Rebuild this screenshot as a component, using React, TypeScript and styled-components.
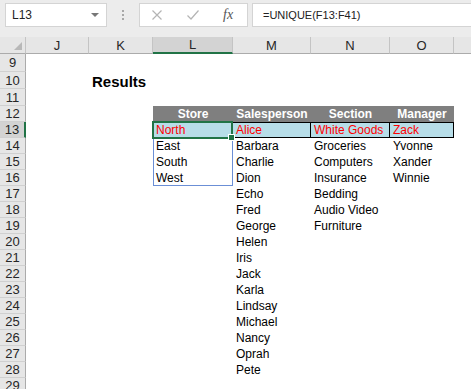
import * as React from "react";
import styled, { createGlobalStyle } from "styled-components";

const GlobalStyle = createGlobalStyle`
  html, body {
    margin: 0;
    padding: 0;
    background: #ffffff;
    overflow: hidden;
  }
  body {
    font-family: "Liberation Sans", Arial, sans-serif;
  }
`;

const columns = [
  { key: "J", width: 63 },
  { key: "K", width: 64 },
  { key: "L", width: 80 },
  { key: "M", width: 78 },
  { key: "N", width: 79 },
  { key: "O", width: 64 },
  { key: "P", width: 40 },
];
const rowHeaderWidth = 26;
const colHeaderHeight = 17;

type CellKind = "title" | "head" | "hit" | "plain";
type CellDef = { text: string; kind: CellKind };

const rowHeights: Record<number, number> = { 9: 18, 10: 17, 11: 17 };

const salespeople = [
  "Barbara", "Charlie", "Dion", "Echo", "Fred", "George", "Helen", "Iris",
  "Jack", "Karla", "Lindsay", "Michael", "Nancy", "Oprah", "Pete",
];
const stores = ["East", "South", "West"];
const sections = ["Groceries", "Computers", "Insurance", "Bedding", "Audio Video", "Furniture"];
const managers = ["Yvonne", "Xander", "Winnie"];

function buildRows() {
  const rows: { num: number; height: number; cells: Record<string, CellDef> }[] = [];
  for (let n = 9; n <= 29; n++) {
    const cells: Record<string, CellDef> = {};
    if (n === 10) cells.K = { text: "Results", kind: "title" };
    if (n === 12) {
      cells.L = { text: "Store", kind: "head" };
      cells.M = { text: "Salesperson", kind: "head" };
      cells.N = { text: "Section", kind: "head" };
      cells.O = { text: "Manager", kind: "head" };
    }
    if (n === 13) {
      cells.L = { text: "North", kind: "hit" };
      cells.M = { text: "Alice", kind: "hit" };
      cells.N = { text: "White Goods", kind: "hit" };
      cells.O = { text: "Zack", kind: "hit" };
    }
    const i = n - 14;
    if (i >= 0) {
      if (stores[i]) cells.L = { text: stores[i], kind: "plain" };
      if (salespeople[i]) cells.M = { text: salespeople[i], kind: "plain" };
      if (sections[i]) cells.N = { text: sections[i], kind: "plain" };
      if (managers[i]) cells.O = { text: managers[i], kind: "plain" };
    }
    rows.push({ num: n, height: rowHeights[n] ?? 16, cells });
  }
  return rows;
}

const Window = styled.div`
  width: 471px;
  height: 389px;
  overflow: hidden;
  background: #ffffff;
  display: flex;
  flex-direction: column;
`;

const FormulaBar = styled.div`
  height: 37px;
  flex-shrink: 0;
  background: #ececec;
  display: flex;
  align-items: flex-start;
  padding: 3px 0 0 5px;
  box-sizing: border-box;
`;

const Box = styled.div<{ $w?: number; $grow?: boolean }>`
  height: 24px;
  box-sizing: border-box;
  background: #ffffff;
  border: 1px solid #d4d4d4;
  display: flex;
  align-items: center;
  ${(p) => (p.$w ? `width: ${p.$w}px;` : "")}
  ${(p) => (p.$grow ? "flex: 1; border-right: none;" : "")}
`;

const NameText = styled.span`
  font-size: 12px;
  color: #222;
  padding-left: 6px;
  flex: 1;
`;

const Caret = styled.span`
  width: 0;
  height: 0;
  border-left: 4px solid transparent;
  border-right: 4px solid transparent;
  border-top: 4px solid #777;
  margin-right: 7px;
`;

const Grip = styled.div`
  width: 32px;
  height: 24px;
  display: flex;
  flex-direction: column;
  align-items: center;
  justify-content: center;
  gap: 2px;
  span {
    width: 2px;
    height: 2px;
    background: #a8a8a8;
  }
`;

const FnButtons = styled(Box)`
  margin-right: 4px;
  gap: 23px;
  padding-left: 11px;
`;

const FxLabel = styled.span`
  font-family: "Liberation Serif", "Times New Roman", serif;
  font-style: italic;
  font-size: 14px;
  color: #555;
`;

const FormulaText = styled.span`
  font-size: 11px;
  color: #222;
  padding-left: 10px;
`;

const SheetArea = styled.div`
  position: relative;
  flex: 1;
`;

const Grid = styled.div<{ $cols: string; $rows: string }>`
  display: grid;
  grid-template-columns: ${(p) => p.$cols};
  grid-template-rows: ${(p) => p.$rows};
`;

const Corner = styled.div`
  background: #e6e6e6;
  border-right: 1px solid #c4c4c4;
  border-bottom: 1px solid #ababab;
  box-sizing: border-box;
  position: relative;
  &::after {
    content: "";
    position: absolute;
    right: 3px;
    bottom: 3px;
    width: 0;
    height: 0;
    border-left: 8px solid transparent;
    border-bottom: 8px solid #b8b8b8;
  }
`;

const ColHead = styled.div<{ $sel?: boolean }>`
  background: ${(p) => (p.$sel ? "#d3d3d3" : "#e6e6e6")};
  border-right: 1px solid #c4c4c4;
  border-bottom: ${(p) => (p.$sel ? "2px solid #217346" : "1px solid #ababab")};
  box-sizing: border-box;
  display: flex;
  align-items: center;
  justify-content: center;
  font-size: 13px;
  color: #262626;
`;

const RowHead = styled.div<{ $sel?: boolean }>`
  background: ${(p) => (p.$sel ? "#d3d3d3" : "#e6e6e6")};
  border-right: ${(p) => (p.$sel ? "2px solid #217346" : "1px solid #ababab")};
  border-bottom: 1px solid #d0d0d0;
  box-sizing: border-box;
  display: flex;
  align-items: center;
  justify-content: center;
  font-size: 13px;
  color: #262626;
`;

const Cell = styled.div<{ $kind?: CellKind }>`
  box-sizing: border-box;
  display: flex;
  align-items: center;
  white-space: nowrap;
  overflow: visible;
  padding-left: 3px;
  font-size: 12px;
  color: #000;
  ${(p) =>
    p.$kind === "title" &&
    `font-size: 15px; font-weight: bold; position: relative; top: 1px;`}
  ${(p) =>
    p.$kind === "head" &&
    `background: #7f7f7f; color: #ffffff; font-weight: bold; justify-content: center; padding-left: 0;`}
  ${(p) =>
    p.$kind === "hit" &&
    `background: #b7dde8; color: #ff0000; border-top: 1px solid #000; border-bottom: 1px solid #000; border-right: 1px solid #000;`}
`;

const Outline = styled.div<{ $color: string; $width: number }>`
  position: absolute;
  box-sizing: border-box;
  border: ${(p) => `${p.$width}px solid ${p.$color}`};
  pointer-events: none;
`;

const Handle = styled.div`
  position: absolute;
  right: -4px;
  bottom: -4px;
  width: 5px;
  height: 5px;
  background: #217346;
  border: 1px solid #ffffff;
`;

function colLeft(key: string) {
  let x = rowHeaderWidth;
  for (const c of columns) {
    if (c.key === key) return x;
    x += c.width;
  }
  return x;
}

function colWidth(key: string) {
  return columns.find((c) => c.key === key)?.width ?? 0;
}

export default function App() {
  const rows = buildRows();
  const rowTop = (n: number) => {
    let y = colHeaderHeight;
    for (const r of rows) {
      if (r.num === n) return y;
      y += r.height;
    }
    return y;
  };
  const cols = `${rowHeaderWidth}px ${columns.map((c) => `${c.width}px`).join(" ")}`;
  const rowTemplate = `${colHeaderHeight}px ${rows.map((r) => `${r.height}px`).join(" ")}`;

  const lx = colLeft("L");
  const lw = colWidth("L");
  const top13 = rowTop(13);
  const top17 = rowTop(17);

  return (
    <Window>
      <GlobalStyle />
      <FormulaBar>
        <Box $w={102}>
          <NameText>L13</NameText>
          <Caret />
        </Box>
        <Grip>
          <span />
          <span />
          <span />
        </Grip>
        <FnButtons $w={109}>
          <svg width="12" height="12" viewBox="0 0 12 12">
            <path d="M1.5 1.5 L10.5 10.5 M10.5 1.5 L1.5 10.5" stroke="#b4b4b4" strokeWidth="1.2" fill="none" />
          </svg>
          <svg width="14" height="12" viewBox="0 0 14 12">
            <path d="M1.5 6.5 L5 10 L12.5 1.5" stroke="#b4b4b4" strokeWidth="1.2" fill="none" />
          </svg>
          <FxLabel>fx</FxLabel>
        </FnButtons>
        <Box $grow>
          <FormulaText>=UNIQUE(F13:F41)</FormulaText>
        </Box>
      </FormulaBar>
      <SheetArea>
        <Grid $cols={cols} $rows={rowTemplate}>
          <Corner />
          {columns.map((c) => (
            <ColHead key={c.key} $sel={c.key === "L"}>
              {c.key === "P" ? "" : c.key}
            </ColHead>
          ))}
          {rows.map((r) => (
            <React.Fragment key={r.num}>
              <RowHead $sel={r.num === 13}>{r.num}</RowHead>
              {columns.map((c) => {
                const cell = r.cells[c.key];
                return (
                  <Cell key={c.key} $kind={cell?.kind}>
                    {cell?.text}
                  </Cell>
                );
              })}
            </React.Fragment>
          ))}
        </Grid>
        <Outline
          $color="#6b8fd6"
          $width={1}
          style={{ left: lx, top: top13 - 1, width: lw, height: top17 - top13 + 1 }}
        />
        <Outline
          $color="#217346"
          $width={2}
          style={{ left: lx - 1, top: top13 - 1, width: lw + 1, height: 18 }}
        >
          <Handle />
        </Outline>
      </SheetArea>
    </Window>
  );
}
